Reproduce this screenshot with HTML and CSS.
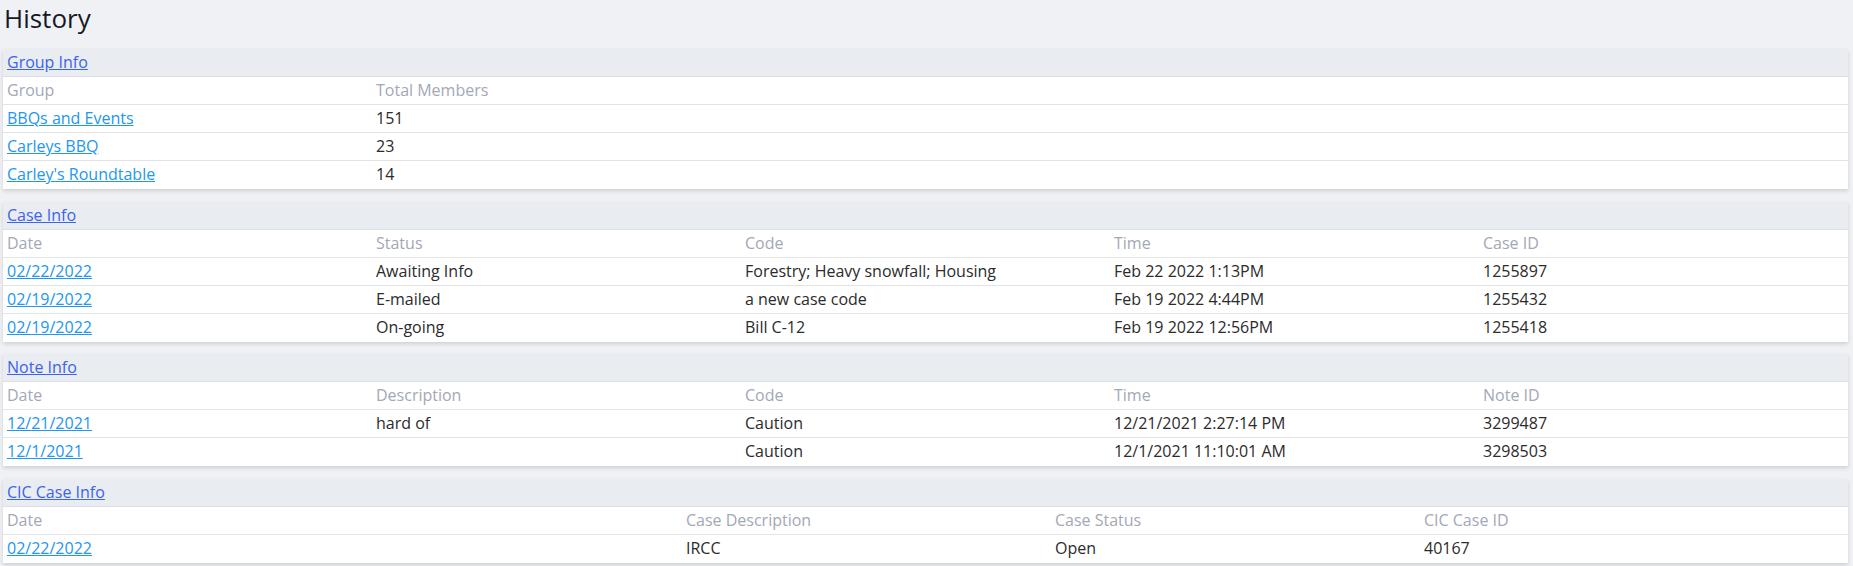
FILE: index.html
```html
<!DOCTYPE html>
<html lang="en">
<head>
    <meta charset="UTF-8">
    <title>History</title>
    <link rel="stylesheet" href="styles.css">
</head>
<body>
    <h1 class="page-title">History</h1>

    <div class="panel">
        <div class="panel-head"><a href="#">Group Info</a></div>
        <div class="row cols-5 labels">
            <span>Group</span><span>Total Members</span>
        </div>
        <div class="row cols-5">
            <a href="#">BBQs and Events</a><span>151</span>
        </div>
        <div class="row cols-5">
            <a href="#">Carleys BBQ</a><span>23</span>
        </div>
        <div class="row cols-5">
            <a href="#">Carley's Roundtable</a><span>14</span>
        </div>
    </div>

    <div class="panel">
        <div class="panel-head"><a href="#">Case Info</a></div>
        <div class="row cols-5 labels">
            <span>Date</span><span>Status</span><span>Code</span><span>Time</span><span>Case ID</span>
        </div>
        <div class="row cols-5">
            <a href="#">02/22/2022</a><span>Awaiting Info</span><span>Forestry; Heavy snowfall; Housing</span><span>Feb 22 2022 1:13PM</span><span>1255897</span>
        </div>
        <div class="row cols-5">
            <a href="#">02/19/2022</a><span>E-mailed</span><span>a new case code</span><span>Feb 19 2022 4:44PM</span><span>1255432</span>
        </div>
        <div class="row cols-5">
            <a href="#">02/19/2022</a><span>On-going</span><span>Bill C-12</span><span>Feb 19 2022 12:56PM</span><span>1255418</span>
        </div>
    </div>

    <div class="panel">
        <div class="panel-head"><a href="#">Note Info</a></div>
        <div class="row cols-5 labels">
            <span>Date</span><span>Description</span><span>Code</span><span>Time</span><span>Note ID</span>
        </div>
        <div class="row cols-5">
            <a href="#">12/21/2021</a><span>hard of</span><span>Caution</span><span>12/21/2021 2:27:14 PM</span><span>3299487</span>
        </div>
        <div class="row cols-5">
            <a href="#">12/1/2021</a><span></span><span>Caution</span><span>12/1/2021 11:10:01 AM</span><span>3298503</span>
        </div>
    </div>

    <div class="panel">
        <div class="panel-head"><a href="#">CIC Case Info</a></div>
        <div class="row cols-cic labels">
            <span>Date</span><span>Case Description</span><span>Case Status</span><span>CIC Case ID</span>
        </div>
        <div class="row cols-cic">
            <a href="#">02/22/2022</a><span>IRCC</span><span>Open</span><span>40167</span>
        </div>
    </div>
</body>
</html>
```

FILE: styles.css
```css
body {
    font-family: "Open Sans", Arial, sans-serif;
    font-size: 16px;
    color: #2b2b2b;
    background: #f0f1f5;
    margin: 0;
    padding: 0 5px 0 3px;
}

.page-title {
    margin: 0 0 13px 1px;
    font-size: 26px;
    font-weight: 400;
    line-height: 36px;
    color: #151826;
}

.panel {
    background: #fff;
    margin-bottom: 12.7px;
    box-shadow: 0 2px 4px rgba(0, 0, 0, 0.14);
}

.panel-head {
    background: #e9ecf1;
    border-bottom: 1px solid #dcdfe4;
    padding: 2px 4px;
    line-height: 23px;
}

.panel-head a {
    color: #3a63ee;
}

.row {
    display: grid;
    border-bottom: 1px solid #e2e3e6;
    padding: 2px 0;
    line-height: 23px;
}

.row:last-child {
    border-bottom: none;
    padding-bottom: 3px;
}

.row > * {
    padding: 0 4px;
    white-space: nowrap;
}

.cols-5 {
    grid-template-columns: repeat(5, 1fr);
}

.cols-cic {
    grid-template-columns: 679fr 369fr 369fr 428fr;
}

.labels {
    color: #a3a8b6;
}

.row a {
    color: #2196f3;
}
```
